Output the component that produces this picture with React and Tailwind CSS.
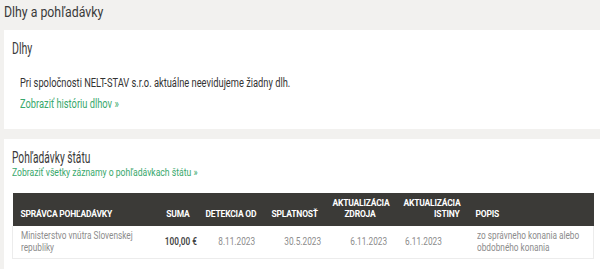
const rows = [
  {
    spravca: 'Ministerstvo vnútra Slovenskej republiky',
    suma: '100,00 €',
    detekcia: '8.11.2023',
    splatnost: '30.5.2023',
    zdroj: '6.11.2023',
    istina: '6.11.2023',
    popis: 'zo správneho konania alebo obdobného konania',
  },
];

// the site's text face is a narrow Roboto; squeeze regular Roboto to its width
function Narrow({ children, right = false, className = '' }) {
  return (
    <div
      className={`scale-x-[0.75] ${right ? 'ml-auto w-max origin-right' : 'origin-left'} ${className}`}
    >
      {children}
    </div>
  );
}

const th = 'px-2 pt-[5px] pb-[6px] align-bottom whitespace-nowrap';
const td = 'px-2 py-1 align-middle';

export default function App() {
  return (
    <div className="min-h-[269px] overflow-hidden bg-[#f2f1ef] pl-1 font-['Roboto',sans-serif] text-[#333]">
      <h1 className="w-max origin-left scale-x-[0.82] pt-[2px] mb-2 text-[15px] leading-[20px] text-[#3a3a3a]">
        Dlhy a pohľadávky
      </h1>

      <section className="bg-white pl-2 pr-[7px] pt-[7px] pb-[17px]">
        <h2 className="w-max origin-left scale-x-[0.62] text-[17px] leading-[22px] text-[#3a3a3a]">Dlhy</h2>
        <div className="pl-2">
          <p className="mt-4 w-max origin-left scale-x-[0.775] text-[12px] leading-[16px] text-[#333]">
            Pri spoločnosti NELT-STAV s.r.o. aktuálne neevidujeme žiadny dlh.
          </p>
          <a
            href="#"
            className="mt-[5px] block w-max origin-left scale-x-[0.775] text-[12px] leading-[16px] text-[#38a86c]"
          >
            Zobraziť históriu dlhov »
          </a>
        </div>
      </section>

      <section className="mt-[10px] bg-white pl-2 pr-[7px] pt-[9px] pb-4">
        <h2 className="w-max origin-left scale-x-[0.6] text-[17px] leading-[19px] text-[#3a3a3a]">
          Pohľadávky štátu
        </h2>
        <a
          href="#"
          className="block w-max origin-left scale-x-[0.82] text-[10.5px] leading-[12px] text-[#38a86c]"
        >
          Zobraziť všetky záznamy o pohľadávkach štátu »
        </a>

        <table className="mt-[14px] w-[581px] table-fixed border-collapse">
          <thead>
            <tr className="bg-[#3b3a37] text-[8.5px] leading-[11px] font-bold uppercase tracking-[-0.2px] text-white">
              <th className={`w-[133px] text-left ${th}`}>Správca pohľadávky</th>
              <th className={`w-[52px] text-right ${th}`}>Suma</th>
              <th className={`w-[66px] text-right ${th}`}>Detekcia od</th>
              <th className={`w-[61px] text-right ${th}`}>Splatnosť</th>
              <th className={`w-[71px] text-center ${th}`}>
                Aktualizácia
                <br />
                zdroja
              </th>
              <th className={`w-[72px] text-right ${th}`}>
                Aktualizácia
                <br />
                istiny
              </th>
              <th className={`w-[126px] text-left ${th}`}>Popis</th>
            </tr>
          </thead>
          <tbody>
            {rows.map((r) => (
              <tr
                key={r.spravca}
                className="border-x border-b border-[#ececec] text-[11px] leading-[12px] text-[#8c8c8c]"
              >
                <td className={`${td} pr-0`}>
                  <Narrow className="w-[168px]">{r.spravca}</Narrow>
                </td>
                <td className={`${td} text-right font-semibold text-[#444]`}>
                  <Narrow right className="whitespace-nowrap">{r.suma}</Narrow>
                </td>
                <td className={`${td} text-right`}>
                  <Narrow right>{r.detekcia}</Narrow>
                </td>
                <td className={`${td} text-right`}>
                  <Narrow right>{r.splatnost}</Narrow>
                </td>
                <td className={`${td} text-right`}>
                  <Narrow right>{r.zdroj}</Narrow>
                </td>
                <td className={`${td} pl-[9px]`}>
                  <Narrow>{r.istina}</Narrow>
                </td>
                <td className={`${td} pl-[9px] pr-0`}>
                  <Narrow className="w-[150px]">{r.popis}</Narrow>
                </td>
              </tr>
            ))}
          </tbody>
        </table>
      </section>
    </div>
  );
}
